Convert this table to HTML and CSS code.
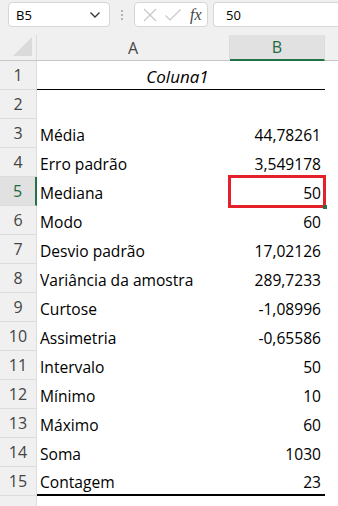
FILE: index.html
```html
<!DOCTYPE html>
<html lang="pt">
<head>
    <meta charset="UTF-8">
    <title>Estatística descritiva</title>
    <link rel="stylesheet" href="styles.css">
</head>
<body>
    <div class="formula-bar">
        <div class="name-box">
            <span>B5</span>
            <svg class="chevron" width="12" height="8" viewBox="0 0 12 8">
                <path d="M1.5 1.5 L6 6 L10.5 1.5" fill="none" stroke="#333" stroke-width="1.3"/>
            </svg>
        </div>
        <div class="grip">
            <i></i><i></i><i></i>
        </div>
        <div class="fx-buttons">
            <svg width="16" height="16" viewBox="0 0 16 16">
                <path d="M2 2 L14 14 M14 2 L2 14" stroke="#c8c8c8" stroke-width="1.2"/>
            </svg>
            <svg width="18" height="16" viewBox="0 0 18 16">
                <path d="M1.5 8.5 L6 13 L16.5 2.5" fill="none" stroke="#c8c8c8" stroke-width="1.2"/>
            </svg>
            <span class="fx">fx</span>
        </div>
        <div class="formula-input">50</div>
    </div>

    <div class="sheet">
        <div class="corner"><span class="select-all"></span></div>
        <div class="col-head">A</div>
        <div class="col-head active">B</div>
        <div class="col-head rest"></div>

        <div class="row-head">1</div>
        <div class="cell title">Coluna1</div>
        <div class="cell"></div>

        <div class="row-head">2</div>
        <div class="cell"></div>
        <div class="cell num"></div>
        <div class="cell"></div>

        <div class="row-head">3</div>
        <div class="cell">Média</div>
        <div class="cell num">44,78261</div>
        <div class="cell"></div>

        <div class="row-head">4</div>
        <div class="cell">Erro padrão</div>
        <div class="cell num">3,549178</div>
        <div class="cell"></div>

        <div class="row-head active">5</div>
        <div class="cell">Mediana</div>
        <div class="cell num selected">50<span class="fill-handle"></span></div>
        <div class="cell"></div>

        <div class="row-head">6</div>
        <div class="cell">Modo</div>
        <div class="cell num">60</div>
        <div class="cell"></div>

        <div class="row-head">7</div>
        <div class="cell">Desvio padrão</div>
        <div class="cell num">17,02126</div>
        <div class="cell"></div>

        <div class="row-head">8</div>
        <div class="cell">Variância da amostra</div>
        <div class="cell num">289,7233</div>
        <div class="cell"></div>

        <div class="row-head">9</div>
        <div class="cell">Curtose</div>
        <div class="cell num">-1,08996</div>
        <div class="cell"></div>

        <div class="row-head">10</div>
        <div class="cell">Assimetria</div>
        <div class="cell num">-0,65586</div>
        <div class="cell"></div>

        <div class="row-head">11</div>
        <div class="cell">Intervalo</div>
        <div class="cell num">50</div>
        <div class="cell"></div>

        <div class="row-head">12</div>
        <div class="cell">Mínimo</div>
        <div class="cell num">10</div>
        <div class="cell"></div>

        <div class="row-head">13</div>
        <div class="cell">Máximo</div>
        <div class="cell num">60</div>
        <div class="cell"></div>

        <div class="row-head">14</div>
        <div class="cell">Soma</div>
        <div class="cell num">1030</div>
        <div class="cell"></div>

        <div class="row-head">15</div>
        <div class="cell last">Contagem</div>
        <div class="cell num last">23</div>
        <div class="cell"></div>

        <div class="row-head"></div>
        <div class="cell"></div>
        <div class="cell"></div>
        <div class="cell"></div>
    </div>
</body>
</html>
```

FILE: styles.css
```css
* {
    margin: 0;
    padding: 0;
    box-sizing: border-box;
}

body {
    font-family: 'Open Sans', 'Noto Sans', sans-serif;
    background-color: #f0f0f0;
    color: #000;
    width: 338px;
    height: 506px;
    overflow: hidden;
}

/* formula bar */

.formula-bar {
    display: flex;
    align-items: center;
    gap: 5px;
    height: 35px;
    padding: 0 0 6px 8px;
}

.name-box,
.fx-buttons,
.formula-input {
    height: 25px;
    background: #fff;
    border: 1px solid #d6d6d6;
    border-radius: 4px;
    display: flex;
    align-items: center;
    font-size: 13px;
}

.name-box {
    width: 102px;
    padding: 0 8px 0 7px;
    justify-content: space-between;
}

.grip {
    width: 14px;
    display: flex;
    flex-direction: column;
    align-items: center;
    gap: 2px;
}

.grip i {
    width: 2px;
    height: 2px;
    background: #b4b4b4;
}

.fx-buttons {
    width: 74px;
    padding: 0 4px 0 7px;
    gap: 6px;
}

.fx {
    font-family: 'Liberation Serif', serif;
    font-style: italic;
    font-size: 16px;
    color: #444;
    margin-left: 2px;
}

.formula-input {
    flex: 1;
    padding-left: 12px;
    border-right: none;
    border-radius: 4px 0 0 4px;
}

/* grid */

.sheet {
    display: grid;
    grid-template-columns: 37px 193px 95px 1fr;
    grid-template-rows: 26px repeat(16, 29px);
    background: #fff;
}

.corner,
.col-head {
    background: #f0f0f0;
    border-bottom: 1px solid #c6c6c6;
}

.corner {
    border-right: 1px solid #dcdcdc;
    position: relative;
}

.select-all {
    position: absolute;
    right: 4px;
    bottom: 4px;
    width: 0;
    height: 0;
    border-left: 19px solid transparent;
    border-bottom: 19px solid #dadada;
}

.col-head {
    display: flex;
    align-items: center;
    justify-content: center;
    font-size: 16px;
    color: #444;
    border-right: 1px solid #dcdcdc;
}

.col-head.active {
    background: #e1e1e1;
    color: #1e6b41;
    border-bottom: 2px solid #217346;
}

.col-head.rest {
    border-right: none;
}

.row-head {
    background: #f0f0f0;
    border-right: 1px solid #dcdcdc;
    border-bottom: 1px solid #dcdcdc;
    display: flex;
    align-items: center;
    justify-content: center;
    font-size: 16px;
    color: #444;
}

.row-head.active {
    background: #e1e1e1;
    color: #1e6b41;
    border-right: 2px solid #217346;
}

.cell {
    font-size: 15.6px;
    display: flex;
    align-items: center;
    padding: 2px 4px 0 3px;
    white-space: nowrap;
}

.cell.num {
    justify-content: flex-end;
}

/* header text centred across columns A and B */
.cell.title {
    grid-column: span 2;
    font-size: 17px;
    font-style: italic;
    justify-content: center;
    padding-right: 10px;
    border-bottom: 1px solid #000;
}

.cell.last {
    border-bottom: 2px solid #000;
}

.cell.selected {
    position: relative;
}

/* red highlight on the selected value */
.cell.selected::before {
    content: "";
    position: absolute;
    left: -2px;
    top: -2px;
    right: -1px;
    bottom: -2px;
    border: 3px solid #e4202b;
}

.fill-handle {
    position: absolute;
    right: -2px;
    bottom: -3px;
    width: 4px;
    height: 4px;
    background: #217346;
}
```
